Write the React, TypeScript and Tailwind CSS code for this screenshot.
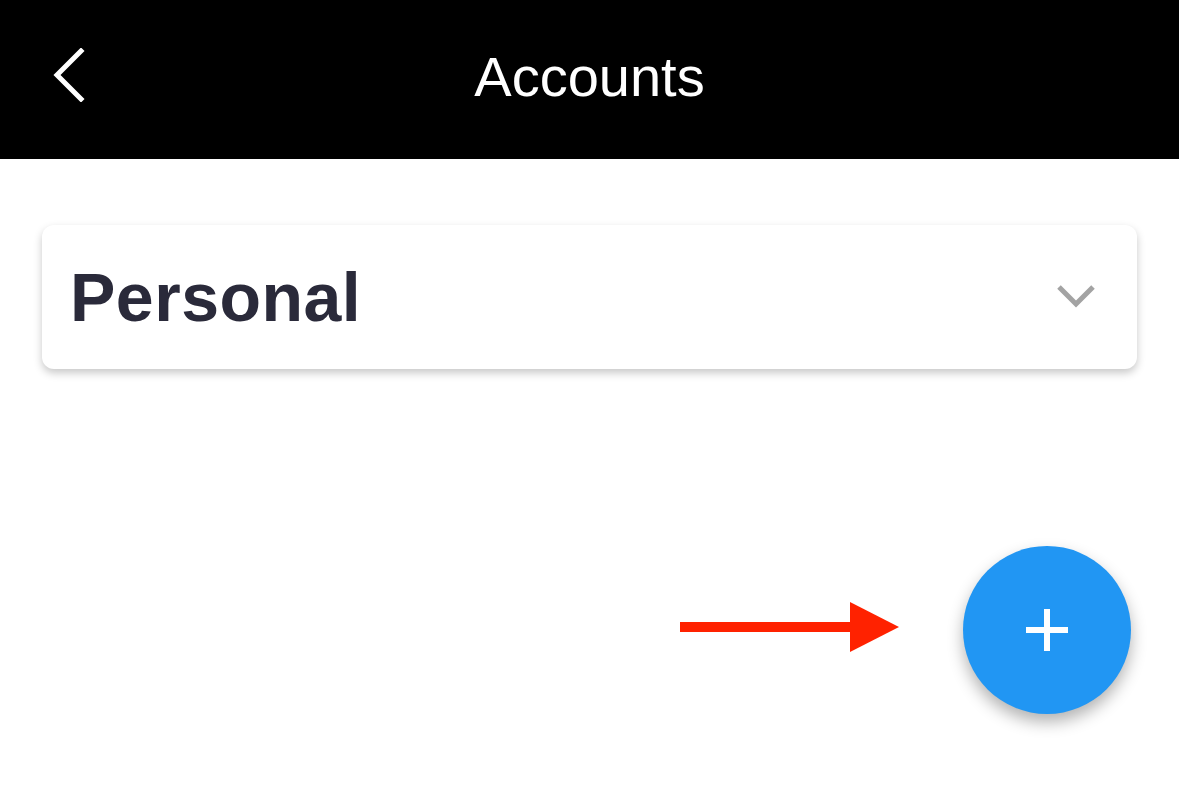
import React from 'react';

const BackChevron: React.FC = () => (
  <svg width="34" height="54" viewBox="0 0 34 54" fill="none">
    <path d="M29 3 L5 27 L29 51" stroke="white" strokeWidth="5" strokeLinecap="square" />
  </svg>
);

const DownChevron: React.FC = () => (
  <svg width="40" height="26" viewBox="0 0 40 26" fill="none">
    <path d="M3 3 L20 20 L37 3" stroke="#a3a3a3" strokeWidth="5" />
  </svg>
);

export default function App() {
  return (
    <div
      className="relative w-[1179px] h-[795px] bg-white overflow-hidden"
      style={{ fontFamily: '"Liberation Sans", Arial, sans-serif' }}
    >
      {/* top bar */}
      <header className="relative h-[159px] bg-black flex items-center justify-center">
        <button className="absolute left-[52px] top-[48px]">
          <BackChevron />
        </button>
        <h1 className="text-white text-[56px] leading-none -mt-[6px]">Accounts</h1>
      </header>

      {/* account group */}
      <div className="px-[42px] pt-[66px]">
        <div className="h-[144px] bg-white rounded-[12px] shadow-[0_4px_8px_rgba(0,0,0,0.22)] flex items-center justify-between pl-[28px] pr-[41px]">
          <span className="text-[68px] font-bold text-[#2a2a3a] leading-none tracking-[0.5px]">Personal</span>
          <DownChevron />
        </div>
      </div>

      {/* annotation arrow */}
      <svg className="absolute left-[680px] top-[602px]" width="220" height="50" viewBox="0 0 220 50">
        <rect x="0" y="20" width="172" height="10" fill="#ff2200" />
        <polygon points="170,0 219,25 170,50" fill="#ff2200" />
      </svg>

      {/* floating add button */}
      <button className="absolute left-[963px] top-[546px] w-[168px] h-[168px] rounded-full bg-[#2196f3] shadow-[0_8px_16px_rgba(0,0,0,0.3)] flex items-center justify-center">
        <svg width="42" height="42" viewBox="0 0 42 42">
          <rect x="18" y="0" width="6" height="42" fill="white" />
          <rect x="0" y="18" width="42" height="6" fill="white" />
        </svg>
      </button>
    </div>
  );
}
